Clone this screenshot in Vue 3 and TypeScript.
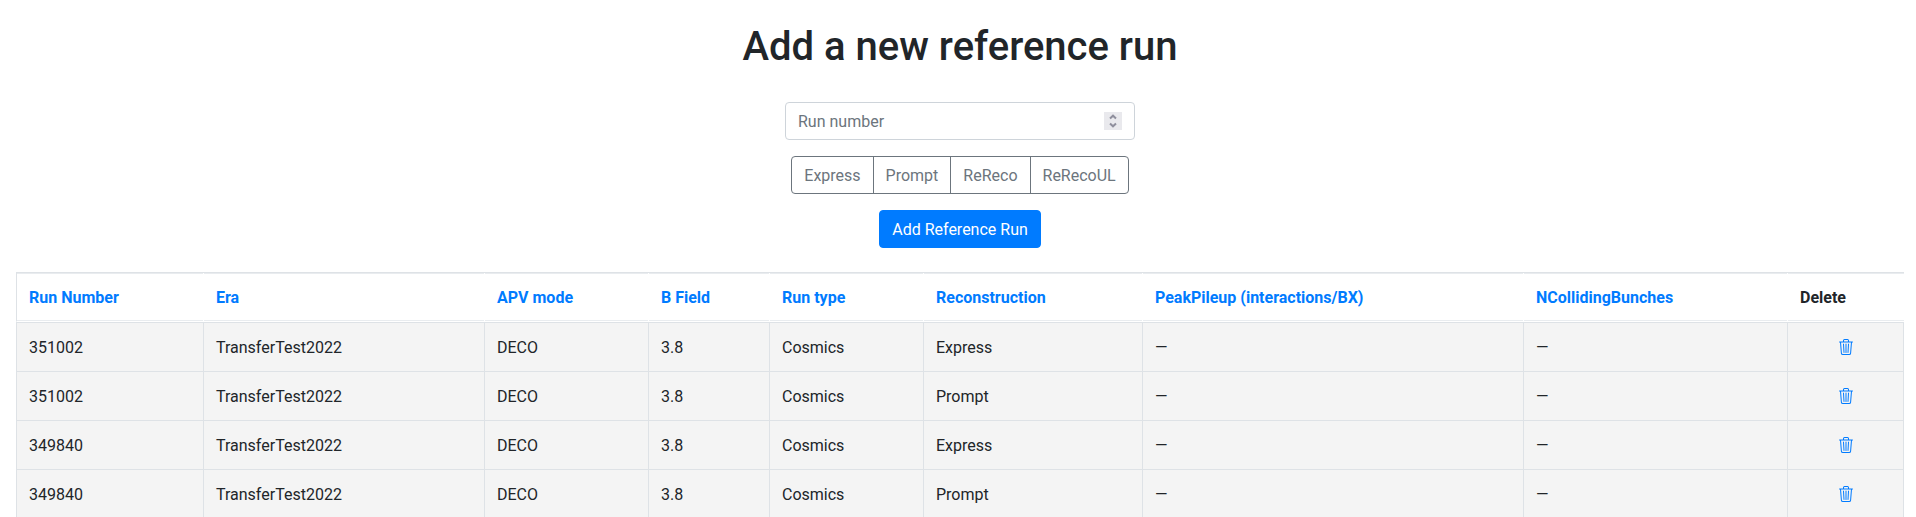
<script setup lang="ts">
import { ref } from 'vue'

interface Column {
  key: keyof Run
  label: string
  width: number
}

interface Run {
  runNumber: number
  era: string
  apvMode: string
  bField: string
  runType: string
  reconstruction: string
  pileup: string
  bunches: string
}

const columns: Column[] = [
  { key: 'runNumber', label: 'Run Number', width: 187 },
  { key: 'era', label: 'Era', width: 281 },
  { key: 'apvMode', label: 'APV mode', width: 164 },
  { key: 'bField', label: 'B Field', width: 121 },
  { key: 'runType', label: 'Run type', width: 154 },
  { key: 'reconstruction', label: 'Reconstruction', width: 219 },
  { key: 'pileup', label: 'PeakPileup (interactions/BX)', width: 381 },
  { key: 'bunches', label: 'NCollidingBunches', width: 264 },
]
const deleteWidth = 117
const totalWidth = columns.reduce((sum, c) => sum + c.width, deleteWidth)
const share = (width: number): string => `${(width / totalWidth) * 100}%`

const makeRun = (runNumber: number, reconstruction: string): Run => ({
  runNumber,
  era: 'TransferTest2022',
  apvMode: 'DECO',
  bField: '3.8',
  runType: 'Cosmics',
  reconstruction,
  pileup: '—',
  bunches: '—',
})

const runs = ref<Run[]>([
  makeRun(351002, 'Express'),
  makeRun(351002, 'Prompt'),
  makeRun(349840, 'Express'),
  makeRun(349840, 'Prompt'),
])

const recoTypes = ['Express', 'Prompt', 'ReReco', 'ReRecoUL']
const runNumber = ref<number | ''>('')
const reco = ref('')

function step(delta: number): void {
  runNumber.value = Number(runNumber.value || 0) + delta
}

function addRun(): void {
  if (runNumber.value === '' || !reco.value) return
  runs.value.unshift(makeRun(runNumber.value, reco.value))
}

function sortBy(key: keyof Run): void {
  runs.value.sort((a, b) => String(a[key]).localeCompare(String(b[key])))
}
</script>

<template>
  <main class="page">
    <h1 class="title">Add a new reference run</h1>

    <form class="form" @submit.prevent="addRun">
      <div class="number-field">
        <input v-model="runNumber" class="number-input" type="number" placeholder="Run number" aria-label="Run number" />
        <span class="spinner">
          <button type="button" class="spin" aria-label="Increase" @click="step(1)">
            <svg width="18" height="9" viewBox="0 0 18 9"><path d="M6 6.5 9 3.7l3 2.8" /></svg>
          </button>
          <button type="button" class="spin" aria-label="Decrease" @click="step(-1)">
            <svg width="18" height="9" viewBox="0 0 18 9"><path d="M6 2.5 9 5.3l3-2.8" /></svg>
          </button>
        </span>
      </div>

      <div class="group" role="radiogroup" aria-label="Reconstruction type">
        <label v-for="type in recoTypes" :key="type" class="option" :class="{ active: reco === type }">
          <input v-model="reco" class="option-input" type="radio" name="reco" :value="type" />
          {{ type }}
        </label>
      </div>

      <button class="submit" type="submit">Add Reference Run</button>
    </form>

    <table class="runs">
      <colgroup>
        <col v-for="col in columns" :key="col.key" :style="{ width: share(col.width) }" />
        <col :style="{ width: share(deleteWidth) }" />
      </colgroup>
      <thead>
        <tr>
          <th v-for="col in columns" :key="col.key" scope="col">
            <a href="#" @click.prevent="sortBy(col.key)">{{ col.label }}</a>
          </th>
          <th scope="col">Delete</th>
        </tr>
      </thead>
      <tbody>
        <tr v-for="(run, index) in runs" :key="index">
          <td v-for="col in columns" :key="col.key">{{ run[col.key] }}</td>
          <td class="actions">
            <button type="button" class="delete" aria-label="Delete run" @click="runs.splice(index, 1)">
              <svg width="16" height="16" viewBox="0 0 16 16" fill="currentColor">
                <path
                  d="M6.5 1h3a.5.5 0 0 1 .5.5v1H6v-1a.5.5 0 0 1 .5-.5ZM11 2.5v-1A1.5 1.5 0 0 0 9.5 0h-3A1.5 1.5 0 0 0 5 1.5v1H2.506a.58.58 0 0 0-.01 0H1.5a.5.5 0 0 0 0 1h.538l.853 10.66A2 2 0 0 0 4.885 16h6.23a2 2 0 0 0 1.994-1.84l.853-10.66h.538a.5.5 0 0 0 0-1h-.995a.59.59 0 0 0-.01 0H11Zm1.958 1-.846 10.58a1 1 0 0 1-.997.92h-6.23a1 1 0 0 1-.997-.92L3.042 3.5h9.916Zm-7.487 1a.5.5 0 0 1 .528.47l.5 8.5a.5.5 0 0 1-.998.06L5 5.03a.5.5 0 0 1 .47-.53Zm5.058 0a.5.5 0 0 1 .47.53l-.5 8.5a.5.5 0 1 1-.998-.06l.5-8.5a.5.5 0 0 1 .528-.47ZM8 4.5a.5.5 0 0 1 .5.5v8.5a.5.5 0 0 1-1 0V5a.5.5 0 0 1 .5-.5Z"
                />
              </svg>
            </button>
          </td>
        </tr>
      </tbody>
    </table>
  </main>
</template>

<style>
body {
  margin: 0;
  background: #fff;
}
</style>

<style scoped>
.page {
  box-sizing: border-box;
  padding: 23px 12px 0 16px;
  font: 400 16px/24px Roboto, "Liberation Sans", sans-serif;
  color: #212529;
}

.title {
  margin: 0 0 31px;
  font-size: 40px;
  font-weight: 500;
  line-height: 48px;
  text-align: center;
}

.form {
  display: flex;
  flex-direction: column;
  align-items: center;
  gap: 16px;
  margin-bottom: 24px;
}

.number-field {
  box-sizing: border-box;
  display: flex;
  align-items: flex-start;
  width: 350px;
  max-width: 100%;
  height: 38px;
  padding: 0 12px;
  border: 1px solid #ced4da;
  border-radius: 4px;
}

.number-input {
  flex: 1;
  min-width: 0;
  height: 24px;
  margin: 7px 0 0;
  padding: 0;
  border: 0;
  outline: 0;
  background: none;
  font: inherit;
  color: #495057;
  appearance: textfield;
}

.number-input::-webkit-inner-spin-button {
  appearance: none;
  margin: 0;
}

.number-input::placeholder {
  color: #6c757d;
  opacity: 1;
}

.spinner {
  display: flex;
  flex-direction: column;
  align-self: center;
  background: #e9e9ed;
}

.spin {
  display: block;
  height: 9px;
  padding: 0;
  border: 0;
  background: none;
}

.spin svg {
  display: block;
  fill: none;
  stroke: #8f8f9d;
  stroke-width: 2;
}

.group {
  display: flex;
}

.option {
  position: relative;
  padding: 7px 12px 5px;
  border: 1px solid #6c757d;
  color: #6c757d;
  cursor: pointer;
}

.option + .option {
  margin-left: -1px;
}

.option:first-child {
  border-radius: 4px 0 0 4px;
}

.option:last-child {
  border-radius: 0 4px 4px 0;
}

.option.active {
  background: #6c757d;
  color: #fff;
}

.option-input {
  position: absolute;
  margin: 0;
  opacity: 0;
  pointer-events: none;
}

.submit {
  padding: 7px 12px 5px;
  border: 1px solid #007bff;
  border-radius: 4px;
  background: #007bff;
  font: inherit;
  color: #fff;
  cursor: pointer;
}

.runs {
  width: 100%;
  table-layout: fixed;
  border-collapse: separate;
  border-spacing: 0;
  border-top: 1px solid #dee2e6;
}

th,
td {
  padding: 13px 12px 11px;
  text-align: left;
}

th {
  border-bottom: 1px solid #fff;
  border-left: 1px solid #fff;
  box-shadow: inset 0 1px #e9ecef, inset 0 -1px #e9ecef;
  font-weight: 700;
}

th:first-child {
  border-left-color: #dee2e6;
}

td {
  border-top: 1px solid #dee2e6;
  border-left: 1px solid #dee2e6;
  background: #f4f4f4;
}

td:last-child {
  border-right: 1px solid #dee2e6;
}

a {
  color: #007bff;
  text-decoration: none;
}

.actions {
  padding: 12px;
}

.delete {
  display: block;
  margin: 0 auto;
  padding: 4px 3px 4px 4px;
  border: 0;
  background: none;
  color: #007bff;
  cursor: pointer;
}

.delete svg {
  display: block;
}
</style>
